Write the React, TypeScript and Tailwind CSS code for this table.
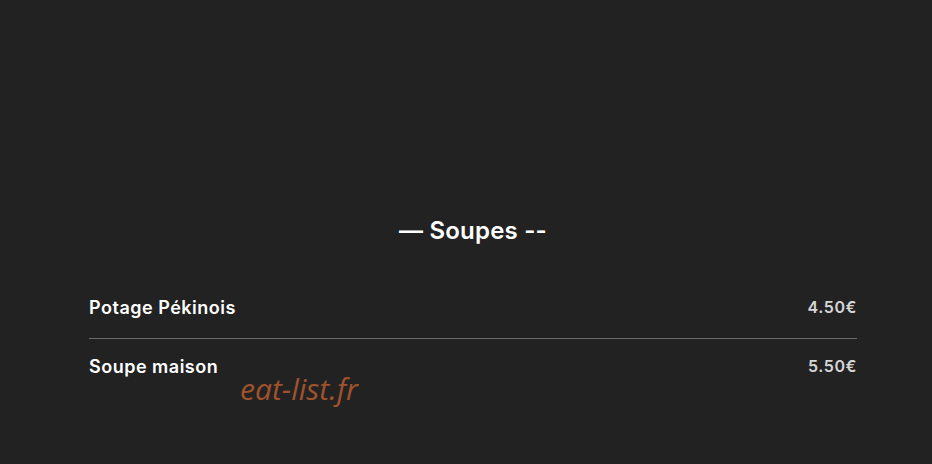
import React from "react";

export default function App() {
  const items = [
    { name: "Potage Pékinois", price: "4.50€" },
    { name: "Soupe maison", price: "5.50€" },
  ];
  return (
    <div
      className="relative w-[932px] h-[464px] bg-[#222222] overflow-hidden"
      style={{ fontFamily: "Inter, 'Noto Sans', sans-serif" }}
    >
      <div className="ml-[89px] w-[768px] pt-[215px]">
        <h2 className="text-center text-white text-[24px] leading-[32px] font-semibold tracking-[0.2px]">
          — Soupes --
        </h2>
        <div className="mt-[37px] flex flex-col">
          {items.map((it, i) => (
            <div
              key={it.name}
              className={
                i === 0
                  ? "flex items-center justify-between pt-[13px] pb-[19px] border-b border-[#6b6b6b]"
                  : "flex items-center justify-between pt-[17px]"
              }
            >
              <span className="text-white text-[18px] leading-[22px] font-semibold tracking-[0.5px]">
                {it.name}
              </span>
              <span className="text-[#d6d6d6] text-[16px] leading-[22px] font-semibold tracking-[0.6px] -translate-y-[1px]">
                {it.price}
              </span>
            </div>
          ))}
        </div>
      </div>
      <div
        className="absolute left-[240px] top-[369px] text-[30px] leading-[40px] italic text-[#a0522d]"
        style={{ fontFamily: "'Open Sans', sans-serif" }}
      >
        eat-list.fr
      </div>
    </div>
  );
}
